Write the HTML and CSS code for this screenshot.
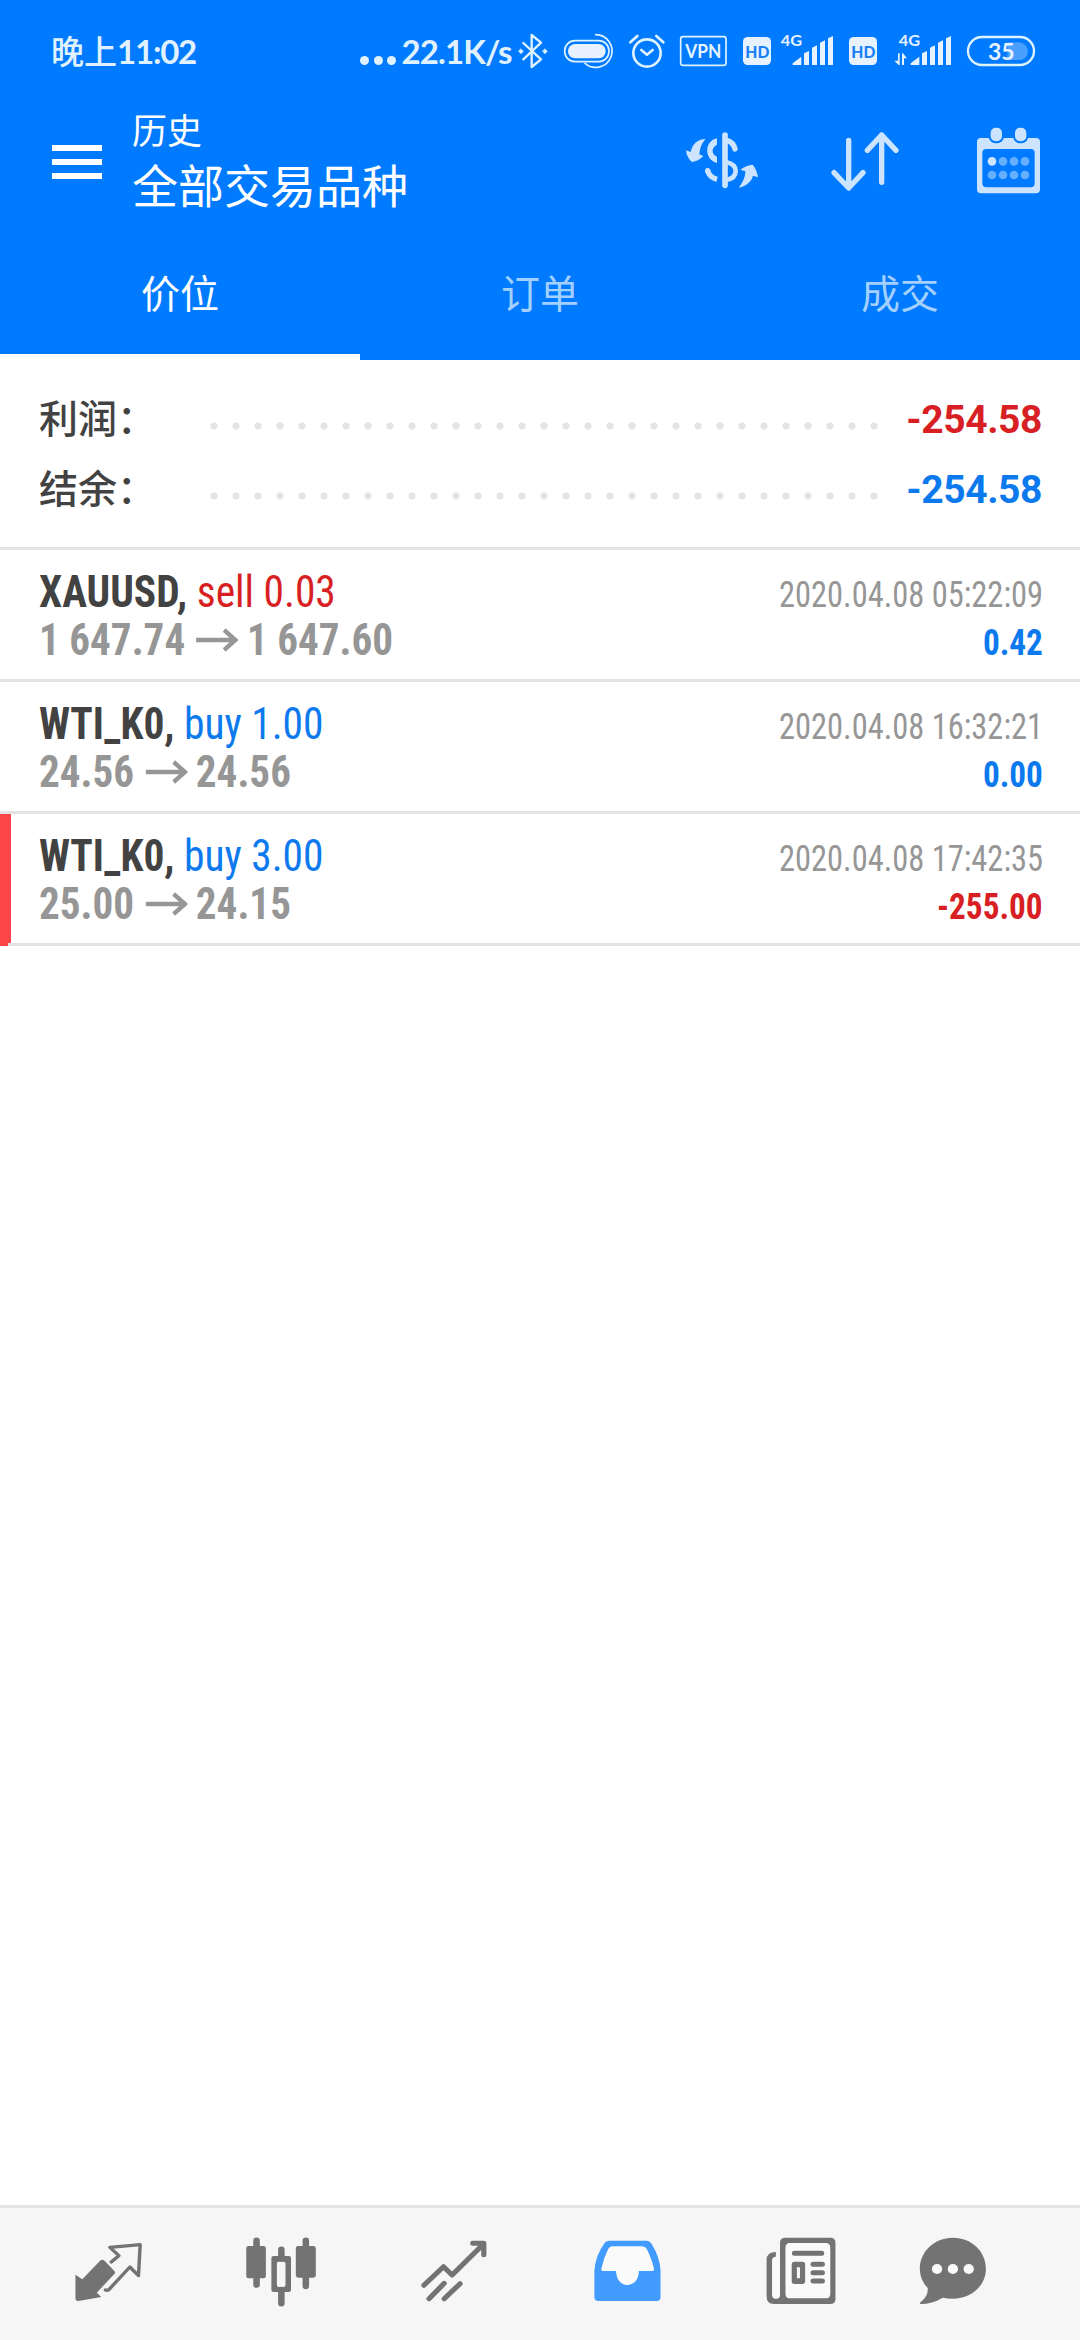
FILE: index.html
```html
<!DOCTYPE html>
<html lang="zh-CN">
<head>
<meta charset="utf-8">
<title>历史</title>
<link rel="stylesheet" href="styles.css">
</head>
<body>
<div class="app">
  <header class="header">
    <div class="status">
      <div class="clock">晚上<span class="clock-digits">11:02</span></div>
      <div class="network"><i></i><i></i><i></i><span class="speed">22.1K/s</span></div>
      <svg class="status-icons" viewBox="-564 0 1704 270">
        <g transform="translate(-1080 0)" fill="none" stroke="#dff3ff" stroke-linecap="round" stroke-linejoin="round">
          <path d="M550 99L603 148L575 171V75L603 98L550 148" stroke-width="7"/>
          <path d="M543 117l7 7-7 7-7-7zM615 117l7 7-7 7-7-7z" fill="#dff3ff" stroke-width="2"/>
          <rect x="674" y="92" width="133" height="63" rx="31" stroke-width="5"/>
          <rect x="684" y="102" width="113" height="43" rx="21" fill="#e8f1ff" stroke="none"/>
          <path d="M767 74A49 49 0 1 1 735 160" stroke-width="5"/>
          <circle cx="921" cy="129" r="41" stroke-width="8"/>
          <path d="M904 120l17 14 17-14M871 97l21-19M970 97l-21-19" stroke-width="8"/>
          <rect x="1022" y="80" width="136" height="86" rx="7" stroke-width="5"/>
        </g>
        <g fill="#e6f3ff">
          <text x="-44" y="144" class="t-vpn" textLength="108" lengthAdjust="spacingAndGlyphs">VPN</text>
          <rect x="129" y="81" width="84" height="84" rx="14"/>
          <text x="136" y="143" class="t-hd" textLength="72" lengthAdjust="spacingAndGlyphs">HD</text>
          <text x="242" y="108" class="t-4g" textLength="64" lengthAdjust="spacingAndGlyphs">4G</text>
          <g id="bars"><path d="M278 165v-5l26-20v25zM312 165v-35l15-7v42zM336 165v-52l15-7v59zM360 165v-67l15-7v74zM384 165v-80l15-7v87z"/></g>
          <rect x="447" y="81" width="84" height="84" rx="14"/>
          <text x="454" y="143" class="t-hd" textLength="72" lengthAdjust="spacingAndGlyphs">HD</text>
          <text x="596" y="108" class="t-4g" textLength="64" lengthAdjust="spacingAndGlyphs">4G</text>
          <use href="#bars" x="354"/>
          <path d="M594 130h5v35h-3l-13-13h11zM606 165v-35h3l12 15h-9v20z"/>
          <path d="M922 97h35a26 26 0 0 1 0 53h-35z" fill="#4a9fff"/>
          <rect x="804" y="81" width="198" height="84" rx="42" fill="none" stroke="#dff3ff" stroke-width="7"/>
          <text x="864" y="150" class="t-bat" textLength="80" lengthAdjust="spacingAndGlyphs">35</text>
        </g>
      </svg>
    </div>
    <div class="toolbar">
      <div class="menu"><i></i><i></i><i></i></div>
      <div class="titles">
        <div class="caption">历史</div>
        <div class="title">全部交易品种</div>
      </div>
      <div class="actions">
        <svg viewBox="111 45 270 270" fill="#cce4ff" stroke="#cce4ff">
          <path d="M255 105V256" stroke-width="17" stroke-linecap="round"/>
          <path d="M262 122Q280 127 285 147" fill="none" stroke-width="16" stroke-linecap="round"/>
          <path d="M258 186C276 190 287 199 287 213C287 228 277 237 258 240" fill="none" stroke-width="14"/>
          <path d="M231 115C192 122 192 180 231 189V170C213 162 214 142 231 134Z" stroke="none"/>
          <path d="M203 212Q208 232 231 238" fill="none" stroke-width="16"/>
          <circle cx="203" cy="212" r="8" stroke="none"/>
          <path d="M196 117C172 118 157 132 152 156L138 151Q140 173 156 186Q175 184 190 168L178 163Q180 135 196 118ZM338 194Q319 195 301 209L316 214C316 235 306 248 297 263C320 257 334 245 339 227L354 232Q350 207 338 194Z" stroke="none"/>
        </svg>
        <svg viewBox="540 45 270 270" fill="none" stroke="#cce4ff" stroke-width="16" stroke-linecap="round" stroke-linejoin="round">
          <path d="M626 121V263M582 218L626 264L669 218M725 247V105M682 151L725 105L768 151"/>
        </svg>
        <svg viewBox="969 45 270 270" fill="#cce4ff">
          <path fill-rule="evenodd" d="M1023 114H1188Q1200 114 1200 126V268Q1200 280 1188 280H1023Q1011 280 1011 268V126Q1011 114 1023 114ZM1039 147Q1027 147 1027 159V250Q1027 262 1039 262H1172Q1184 262 1184 250V159Q1184 147 1172 147Z"/>
          <rect x="1049" y="80" width="40" height="47" rx="18" stroke="#007aff" stroke-width="6"/>
          <rect x="1122" y="80" width="40" height="47" rx="18" stroke="#007aff" stroke-width="6"/>
          <circle cx="1056" cy="184" r="13"/>
          <g fill="#66afff"><circle cx="1089" cy="184" r="13"/><circle cx="1122" cy="184" r="13"/><circle cx="1155" cy="184" r="13"/><circle cx="1056" cy="225" r="13"/><circle cx="1089" cy="225" r="13"/><circle cx="1122" cy="225" r="13"/><circle cx="1155" cy="225" r="13"/></g>
        </svg>
      </div>
    </div>
    <nav class="tabs">
      <div class="tab active">价位</div>
      <div class="tab">订单</div>
      <div class="tab">成交</div>
    </nav>
  </header>

  <section class="summary">
    <div class="sum-row"><span class="sum-label">利润：</span><span class="leader"></span><span class="sum-value loss">-254.58</span></div>
    <div class="sum-row"><span class="sum-label">结余：</span><span class="leader"></span><span class="sum-value gain">-254.58</span></div>
  </section>

  <main class="deals">
    <article class="deal">
      <div class="line"><div class="symbol">XAUUSD, <span class="side loss">sell 0.03</span></div><div class="date">2020.04.08 05:22:09</div></div>
      <div class="line"><div class="prices"><span>1 647.74</span><svg class="arrow" viewBox="0 0 45 24"><path d="M0 12H42M30 2L42 12L30 22"/></svg><span>1 647.60</span></div><div class="profit gain">0.42</div></div>
    </article>
    <article class="deal">
      <div class="line"><div class="symbol">WTI_K0, <span class="side gain">buy 1.00</span></div><div class="date">2020.04.08 16:32:21</div></div>
      <div class="line"><div class="prices"><span>24.56</span><svg class="arrow" viewBox="0 0 45 24"><path d="M0 12H42M30 2L42 12L30 22"/></svg><span>24.56</span></div><div class="profit gain">0.00</div></div>
    </article>
    <article class="deal stopped">
      <div class="line"><div class="symbol">WTI_K0, <span class="side gain">buy 3.00</span></div><div class="date">2020.04.08 17:42:35</div></div>
      <div class="line"><div class="prices"><span>25.00</span><svg class="arrow" viewBox="0 0 45 24"><path d="M0 12H42M30 2L42 12L30 22"/></svg><span>24.15</span></div><div class="profit loss">-255.00</div></div>
    </article>
  </main>

  <footer class="bottom">
    <div class="item"><svg viewBox="197.4 54 232.3 396" preserveAspectRatio="none">
      <path d="M292 211Q297 207 302 211L332 243Q336 247 332 252L281 308L294 321L228 333Q220 334 219 326V254L239 268Z"/>
      <path d="M323 216L345 197L319 172L407 164L402 257L377 231L317 298Q312 302 306 300" class="stroke" stroke-width="10"/>
    </svg></div>
    <div class="item"><svg viewBox="699.8 54 232.3 396" preserveAspectRatio="none">
      <rect x="715" y="168" width="57" height="97" rx="7"/><rect x="859" y="168" width="58" height="95" rx="7"/>
      <path d="M745 152V284M888 152V288M817 179V205M817 300V340" class="stroke" stroke-width="19"/>
      <path fill-rule="evenodd" d="M795 198H839Q845 198 845 204V300Q845 306 839 306H795Q788 306 788 300V204Q788 198 795 198ZM809 215Q804 215 804 220V285Q804 291 809 291H823Q829 291 829 285V220Q829 215 823 215Z"/>
    </svg></div>
    <div class="item"><svg viewBox="1202.3 54 232.3 396" preserveAspectRatio="none">
      <path d="M1231 286L1288 230L1313 255L1402 164M1373 160H1405V194M1246 326L1290 280M1290 326L1336 281" class="stroke" stroke-width="15"/>
    </svg></div>
    <div class="item active"><svg viewBox="136.5 54 232.3 396" preserveAspectRatio="none">
      <path d="M200 152H310Q319 152 324 161Q348 202 350 240V322Q350 333 339 333H170Q158 333 158 322V240Q162 196 187 160Q191 152 200 152Z"/>
      <path class="hole" d="M210 169H296Q306 169 310 177Q323 202 331 236Q332 243 326 243H287C287 270 271 285 253 285C236 285 221 269 221 243H182Q177 243 178 237Q185 203 198 177Q202 169 210 169Z"/>
    </svg></div>
    <div class="item"><svg viewBox="638.9 54 232.3 396" preserveAspectRatio="none">
      <path fill-rule="evenodd" d="M713 143H843Q858 143 858 158V327Q858 342 843 342H679Q658 342 658 318V210Q658 186 685 186V200Q674 200 674 212V314Q674 326 685 326Q697 326 697 314V158Q697 143 713 143ZM727 159Q713 159 713 173V311Q713 325 727 325H829Q843 325 843 311V173Q843 159 829 159Z"/>
      <path class="hole" d="M727 160H829Q842 160 842 173V311Q842 324 829 324H727Q714 324 714 311V173Q714 160 727 160ZM685 201H697V314Q697 325 685 325Q675 325 675 314V212Q675 201 685 201Z"/>
      <path class="stroke" stroke-width="15" d="M739 190H818M793 223H820M793 248H820M793 273H820"/>
      <path fill-rule="evenodd" d="M739 215H762Q770 215 770 223V274Q770 282 762 282H739Q731 282 731 274V223Q731 215 739 215ZM746 232V265H755V232Z"/>
    </svg></div>
    <div class="item last"><svg viewBox="1083.2 54 232.3 396" preserveAspectRatio="none">
      <path d="M1199 143C1255 143 1295 186 1295 236C1295 287 1252 326 1199 326Q1184 326 1170 323Q1138 342 1106 342Q1101 340 1106 336Q1128 318 1126 294Q1103 270 1103 236C1103 186 1144 143 1199 143Z"/>
      <circle cx="1153" cy="237" r="15" class="hole"/><circle cx="1199" cy="237" r="15" class="hole"/><circle cx="1245" cy="237" r="15" class="hole"/>
    </svg></div>
  </footer>
</div>
</body>
</html>
```
FILE: styles.css
```css
* { box-sizing: border-box; }
body { margin: 0; background: #fff; font-family: Roboto, "Noto Sans CJK SC", sans-serif; }
svg { display: block; flex: none; }
.app { width: 1080px; height: 2340px; display: flex; flex-direction: column; overflow: hidden; }
.header { height: 360px; background: #007aff; color: #fff; display: flex; flex-direction: column; }

.status { height: 100px; padding: 10px 0 0 51px; display: flex; align-items: flex-start; color: #e0f2ff; font-family: Lato, "Noto Sans CJK SC", sans-serif; }
.clock { width: 309px; font-size: 33px; font-weight: 500; line-height: 82px; white-space: nowrap; }
.clock-digits { font-weight: 700; letter-spacing: -1.2px; }
.network { width: 152px; display: flex; line-height: 84px; font-size: 33px; font-weight: 700; }
.network i { width: 9px; height: 9px; margin: 46px 4.5px 0 0; border-radius: 50%; background: #e0f2ff; }
.speed { margin-top: -1px; padding-left: 1px; letter-spacing: -0.9px; white-space: nowrap; }
.status-icons { width: 568px; height: 90px; }
.t-vpn { font: 700 55px Lato, sans-serif; }
.t-hd { font: 900 51px Lato, sans-serif; fill: #1a80f5; }
.t-4g { font: 700 47px Lato, sans-serif; }
.t-bat { font: 700 71px Lato, sans-serif; }

.toolbar { height: 133px; display: flex; padding-left: 52px; }
.menu { width: 80px; padding-top: 45px; display: flex; flex-direction: column; gap: 8px; }
.menu i { width: 50px; height: 6px; background: #fff; }
.titles { width: 518.5px; }
.caption { font-size: 35px; line-height: 40px; padding-top: 13px; }
.title { font-size: 46px; line-height: 60px; padding-top: 4px; }
.actions { display: flex; padding-top: 15px; }
.actions svg { width: 90px; height: 90px; margin: 0 26.5px; }

.tabs { flex: 1; display: grid; grid-template-columns: repeat(3, 1fr); }
.tab { padding-top: 4px; text-align: center; font-size: 39px; line-height: 118px; color: #a3d0ff; border-bottom: 6px solid transparent; }
.tab.active { color: #fff; border-bottom-color: #fff; }

.loss { color: #d71f24; }
.gain { color: #0c7aee; }

.summary { height: 190px; padding: 25px 38px 0 39px; border-bottom: 3px solid #e3e3e3; }
.sum-row { height: 70px; display: flex; align-items: center; }
.sum-label { width: 163.5px; font-size: 39px; font-weight: 500; line-height: 70px; color: #424242; }
.leader { width: 682px; height: 8px; margin-top: 12px; background: radial-gradient(circle at 11px 4px, #e4e4e4 3.2px, transparent 4px) 0 0 / 22px 8px repeat-x; }
.sum-value { flex: 1; text-align: right; font-size: 39px; font-weight: 700; letter-spacing: -0.4px; }

.deal { height: 132px; padding: 18px 37.5px 0 39px; border-bottom: 3px solid #e3e3e3; font-stretch: 75%; }
.deal.stopped { border-image: linear-gradient(90deg, #fc4548 11px, #e3e3e3 11px) 3; background: linear-gradient(90deg, #fc4548 11px, transparent 11px); }
.line { height: 48px; display: flex; justify-content: space-between; line-height: 48px; white-space: nowrap; }
.symbol { font-size: 44px; font-weight: 700; color: #424242; transform: scaleX(0.941); transform-origin: left; }
.side { font-weight: 400; }
.date { font-size: 37px; color: #969696; padding-top: 3px; transform: scaleX(0.877); transform-origin: right; }
.prices { display: flex; font-size: 44px; font-weight: 700; color: #969696; transform: scaleX(0.935); transform-origin: left; }
.arrow { width: 45px; height: 24px; margin: 12px 9px 0 12px; fill: none; stroke: #969696; stroke-width: 4.5; }
.profit { font-size: 37px; font-weight: 700; padding-top: 3px; transform: scaleX(0.897); transform-origin: right; }

.bottom { margin-top: auto; height: 135px; display: flex; padding-left: 21.5px; border-top: 3px solid #e3e3e3; background: #f6f6f6; }
.item { width: 173px; display: flex; justify-content: center; fill: #737373; stroke: none; }
.item.last { width: 133px; }
.item.active { fill: #429bff; }
.item svg { width: 80px; height: 132px; }
.stroke { fill: none; stroke: #737373; stroke-linecap: round; stroke-linejoin: round; }
.hole { fill: #fafafa; }
```
